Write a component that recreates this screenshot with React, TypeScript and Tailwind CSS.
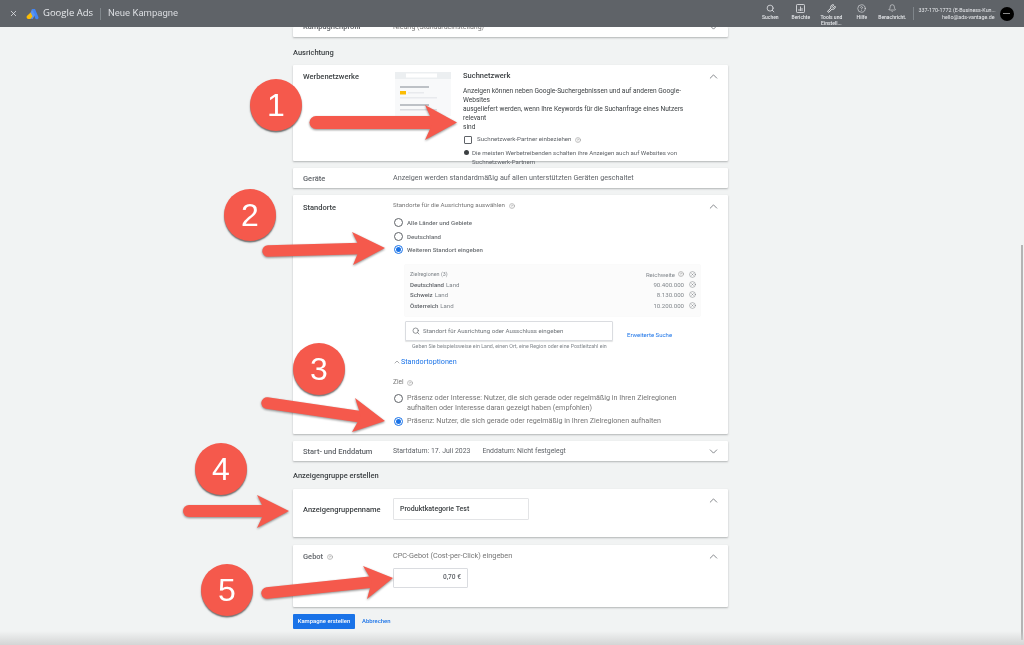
import { Bell, ChevronDown, ChevronUp, CircleHelp, CircleX, Search, Wrench, X } from "lucide-react"
import type { ReactNode } from "react"

const regions = [
  { name: "Deutschland", reach: "90.400.000" },
  { name: "Schweiz", reach: "8.130.000" },
  { name: "Österreich", reach: "10.200.000" },
]

function Help({ size = 7 }: { size?: number }) {
  return <CircleHelp size={size} strokeWidth={1.6} className="shrink-0 text-[#757575]" />
}

function Radio({ checked = false }: { checked?: boolean }) {
  return (
    <span
      className={`flex h-[9px] w-[9px] shrink-0 items-center justify-center rounded-full border-[1px] ${
        checked ? "border-[#1a73e8]" : "border-[#5f6368]"
      }`}
    >
      {checked && <span className="h-[5px] w-[5px] rounded-full bg-[#1a73e8]" />}
    </span>
  )
}

function Card({
  label,
  open = true,
  className = "",
  children,
}: {
  label: ReactNode
  open?: boolean
  className?: string
  children?: ReactNode
}) {
  return (
    <div className={`flex rounded-[1px] bg-white shadow-[0_1px_2px_rgba(60,64,67,0.35)] ${className}`}>
      <div className="w-[100px] shrink-0 pl-[10px] text-[7.5px] font-medium text-[#3c4043]">{label}</div>
      <div className="min-w-0 flex-1">{children}</div>
      <div className="flex w-[30px] shrink-0 justify-center pt-[5px]">
        {open ? (
          <ChevronUp size={13} strokeWidth={1.4} className="text-[#5f6368]" />
        ) : (
          <ChevronDown size={13} strokeWidth={1.4} className="text-[#5f6368]" />
        )}
      </div>
    </div>
  )
}

function NavItem({ icon, children }: { icon: ReactNode; children: ReactNode }) {
  return (
    <div className="flex w-[30.5px] flex-col items-center pt-[3px] text-center text-[5px] leading-[6px] font-medium text-[#e8eaed]">
      <div className="flex h-[10px] items-center">{icon}</div>
      <div className="mt-[1px]">{children}</div>
    </div>
  )
}

// the red arrows and numbers drawn on top of the screenshot
function Annotations() {
  const red = "#f5594c"
  const arrows = [
    { line: "M316 122.5H436", head: "425,105 457,122.5 425,140 433,122.5", w: 13 },
    { line: "M268 251L360 248.5", head: "352,232 385,248 353,265 360,248", w: 11.5 },
    { line: "M267 403L362 417", head: "355,398 385,421 352,432 361,416", w: 11.5 },
    { line: "M189 511H266", head: "257,495 289,511 257,528 265,511", w: 12 },
    { line: "M267 593L372 582", head: "363,566 393,578 367,599 372,581", w: 11.5 },
  ]
  const circles = [
    { n: 1, box: "left-[250px] top-[79px]" },
    { n: 2, box: "left-[224px] top-[189px]" },
    { n: 3, box: "left-[293px] top-[343px]" },
    { n: 4, box: "left-[195px] top-[443px]" },
    { n: 5, box: "left-[201px] top-[564px]" },
  ]
  return (
    <>
      <svg className="pointer-events-none absolute inset-0 drop-shadow-[0_1px_1px_rgba(0,0,0,0.45)]" width="1024" height="645">
        {arrows.map((a) => (
          <g key={a.head}>
            <path d={a.line} stroke={red} strokeWidth={a.w} strokeLinecap="round" fill="none" />
            <polygon points={a.head} fill={red} />
          </g>
        ))}
      </svg>
      {circles.map((c) => (
        <div
          key={c.n}
          className={`absolute flex h-[52px] w-[52px] items-center justify-center rounded-full bg-[#f5594c] font-['Liberation_Sans',sans-serif] text-[32px] text-white shadow-[0_1.5px_1.5px_rgba(0,0,0,0.55)] ${c.box}`}
        >
          {c.n}
        </div>
      ))}
    </>
  )
}

export default function App() {
  return (
    <div className="relative h-[645px] w-[1024px] overflow-hidden bg-[#f1f3f3] font-['Roboto',sans-serif] blur-[0.4px]">
      <header className="relative z-10 flex h-[27px] items-center bg-[#5f6368] text-[#e8eaed]">
        <X size={9} strokeWidth={2} className="ml-[9px]" />
        <svg className="ml-[8px]" width="13" height="12" viewBox="0 0 13 12">
          <path d="M6 1h3l3.5 8.2a1.8 1.8 0 0 1-3.2 1.4z" fill="#4285f4" />
          <path d="M6 1l3 6-2.4 4-4.2-.7z" fill="#5b93f0" />
          <path d="M4.6 4.6L6.6 8.4 4.4 11H2.4A2 2 0 0 1 .9 8z" fill="#fbbc04" />
        </svg>
        <span className="ml-[4px] font-['Open_Sans',sans-serif] text-[9.5px] whitespace-nowrap">Google Ads</span>
        <span className="mx-[7px] h-[12px] w-px bg-[#80868b]" />
        <span className="text-[9.5px] whitespace-nowrap text-[#dadce0]">Neue Kampagne</span>

        <div className="ml-[577px] flex h-full">
          <NavItem icon={<Search size={9} strokeWidth={2} />}>Suchen</NavItem>
          <NavItem
            icon={
              <svg width="9" height="9" viewBox="0 0 9 9" fill="none" stroke="currentColor">
                <rect x="0.5" y="0.5" width="8" height="8" rx="0.8" strokeWidth="0.8" />
                <path d="M3 7V5M4.5 7V2.5M6 7V4" strokeWidth="0.8" />
              </svg>
            }
          >
            Berichte
          </NavItem>
          <NavItem icon={<Wrench size={9} strokeWidth={2.6} />}>
            Tools und
            <br />
            Einstell...
          </NavItem>
          <NavItem icon={<CircleHelp size={9} strokeWidth={1.6} />}>Hilfe</NavItem>
          <NavItem icon={<Bell size={8.5} strokeWidth={1.6} />}>Benachricht.</NavItem>
        </div>
        <span className="mx-[5px] h-[13px] w-px bg-[#80868b]" />
        <div className="w-[76px] text-right text-[5.35px] leading-[7px] whitespace-nowrap text-[#e8eaed]">
          <div>337-170-1772 (E-Business-Kun...</div>
          <div>hello@ads-vantage.de</div>
        </div>
        <div className="ml-[5px] flex h-[14px] w-[14px] shrink-0 items-center justify-center rounded-full bg-black">
          <span className="h-[1px] w-[7px] bg-[#8a8a8a]" />
        </div>
      </header>

      <main className="ml-[293px] w-[435px]">
        <Card
          label={<div className="-mt-[5px] leading-[10px] text-[#5f6368]">Kampagnenprofil</div>}
          open={false}
          className="h-[10px] [&>div:last-child]:-mt-[6px] [&>div:last-child]:pt-0"
        >
          <div className="-mt-[5px] text-[7px] leading-[10px] text-[#757575]">Niedrig (Standardeinstellung)</div>
        </Card>

        <h2 className="mt-[11px] text-[7.5px] leading-[10px] font-medium text-[#3c4043]">Ausrichtung</h2>

        <Card label={<div className="pt-[6px]">Werbenetzwerke</div>} className="mt-[7px] h-[96px]">
          <div className="flex">
            <svg className="mt-[7px] ml-[2px] shrink-0" width="56" height="44" viewBox="0 0 56 44">
              <rect width="56" height="44" fill="#f8f9fa" />
              <rect width="56" height="7" fill="#eceff1" />
              <rect x="11" y="1.5" width="31" height="4" fill="#fff" />
              <rect x="5" y="14" width="29" height="2" fill="#bdc1c6" />
              <rect x="5" y="19" width="6" height="3.5" fill="#fbbc04" />
              <rect x="13" y="20" width="16" height="1.5" fill="#e8eaed" />
              <rect x="5" y="25" width="37" height="1.5" fill="#e8eaed" />
              <rect x="5" y="32" width="29" height="2" fill="#bdc1c6" />
              <rect x="5" y="37" width="37" height="1.5" fill="#dadce0" />
            </svg>
            <div className="ml-[12px] min-w-0 flex-1 pt-[6px]">
              <div className="text-[7.5px] leading-[10px] font-medium text-[#3c4043]">Suchnetzwerk</div>
              <p className="mt-[6px] text-[6.6px] leading-[9px] whitespace-pre-line text-[#3c4043]">
                {"Anzeigen können neben Google-Suchergebnissen und auf anderen Google-Websites\nausgeliefert werden, wenn Ihre Keywords für die Suchanfrage eines Nutzers relevant\nsind"}
              </p>
              <div className="mt-[3px] flex items-center text-[6.15px] text-[#5f6368]">
                <span className="ml-[1px] h-[8px] w-[8px] shrink-0 rounded-[1px] border-[1px] border-[#5f6368]" />
                <span className="ml-[5px] whitespace-nowrap">Suchnetzwerk-Partner einbeziehen</span>
                <span className="ml-[4px]">
                  <Help size={6} />
                </span>
              </div>
              <div className="mt-[4px] flex items-start text-[6.1px] leading-[9px] text-[#5f6368]">
                <span className="mt-[2px] ml-[1px] flex h-[5px] w-[5px] shrink-0 rounded-full bg-[#3c4043]" />
                <span className="ml-[3px]">Die meisten Werbetreibenden schalten ihre Anzeigen auch auf Websites von Suchnetzwerk-Partnern</span>
              </div>
            </div>
          </div>
        </Card>

        <Card label={<div className="pt-[5px] text-[#5f6368]">Geräte</div>} open={false} className="mt-[7px] h-[20px] [&>div:last-child]:invisible">
          <div className="pt-[5px] text-[7.2px] whitespace-nowrap text-[#5f6368]">
            Anzeigen werden standardmäßig auf allen unterstützten Geräten geschaltet
          </div>
        </Card>

        <Card label={<div className="pt-[7px]">Standorte</div>} className="mt-[7px] h-[239px]">
          <div className="flex items-center gap-[4px] pt-[6px] text-[6.2px] leading-[9px] text-[#757575]">
            Standorte für die Ausrichtung auswählen <Help size={6} />
          </div>
          <div className="mt-[8px] flex flex-col gap-[4.6px] text-[6.1px] leading-[9px] font-medium text-[#6b6f73]">
            {["Alle Länder und Gebiete", "Deutschland", "Weiteren Standort eingeben"].map((t, i) => (
              <label key={t} className="flex items-center gap-[4px] pl-[1px]">
                <Radio checked={i === 2} />
                {t}
              </label>
            ))}
          </div>

          <div className="mt-[11px] ml-[12px] w-[295px] bg-[#fbfbfb] pt-[4px] pr-[4px] pb-[6px] pl-[5px] shadow-[0_0_1px_rgba(60,64,67,0.15)]">
            <div className="flex h-[10px] items-center text-[5.4px] text-[#80868b]">
              <span>Zielregionen (3)</span>
              <span className="ml-auto text-[6px]">Reichweite</span>
              <span className="mr-[5px] ml-[3px]">
                <Help size={6} />
              </span>
              <CircleX size={7} strokeWidth={1.4} className="text-[#5f6368]" />
            </div>
            {regions.map((r) => (
              <div key={r.name} className="flex h-[10.4px] items-center text-[6.1px] text-[#80868b]">
                <span className="font-medium text-[#5f6368]">{r.name}</span>
                <span className="ml-[2px]">Land</span>
                <span className="mr-[5px] ml-auto">{r.reach}</span>
                <CircleX size={7} strokeWidth={1.4} className="text-[#5f6368]" />
              </div>
            ))}
          </div>

          <div className="mt-[5px] ml-[12px] flex items-center">
            <div className="flex h-[20px] w-[208px] items-center rounded-[1px] border border-[#dadce0] bg-white pl-[6px] text-[6.15px] text-[#70757a] shadow-[0_1px_1px_rgba(60,64,67,0.15)]">
              <Search size={8} strokeWidth={2} className="text-[#5f6368]" />
              <span className="ml-[3px] whitespace-nowrap">Standort für Ausrichtung oder Ausschluss eingeben</span>
            </div>
            <a className="mt-[6px] ml-[14px] text-[6px] whitespace-nowrap text-[#1a73e8]">Erweiterte Suche</a>
          </div>
          <div className="mt-[2px] ml-[19px] text-[5.3px] leading-[7px] whitespace-nowrap text-[#80868b]">
            Geben Sie beispielsweise ein Land, einen Ort, eine Region oder eine Postleitzahl ein
          </div>

          <div className="mt-[7px] flex items-center text-[7.2px] leading-[9px] text-[#1a73e8]">
            <ChevronUp size={8} strokeWidth={1.6} className="text-[#5f6368]" />
            Standortoptionen
          </div>

          <div className="mt-[12px] flex items-center gap-[3px] text-[6.6px] leading-[9px] text-[#757575]">
            Ziel <Help size={6} />
          </div>
          <div className="mt-[6px] flex gap-[4px] pl-[1px] text-[7.2px] leading-[10px] text-[#757575]">
            <span className="mt-[1px]">
              <Radio />
            </span>
            <span className="whitespace-pre-line">
              {"Präsenz oder Interesse: Nutzer, die sich gerade oder regelmäßig in Ihren Zielregionen\naufhalten oder Interesse daran gezeigt haben (empfohlen)"}
            </span>
          </div>
          <div className="mt-[3px] flex gap-[4px] pl-[1px] text-[7.2px] leading-[10px] text-[#757575]">
            <span className="mt-[1px]">
              <Radio checked />
            </span>
            <span className="whitespace-nowrap">Präsenz: Nutzer, die sich gerade oder regelmäßig in Ihren Zielregionen aufhalten</span>
          </div>
        </Card>

        <Card label={<div className="pt-[5px] text-[#5f6368]">Start- und Enddatum</div>} open={false} className="mt-[7px] h-[20px] [&>div:last-child]:pt-[4px]">
          <div className="flex gap-[12px] pt-[5px] text-[6.9px] whitespace-nowrap text-[#5f6368]">
            <span>Startdatum: 17. Juli 2023</span>
            <span>Enddatum: Nicht festgelegt</span>
          </div>
        </Card>

        <h2 className="mt-[10px] text-[7.5px] leading-[10px] font-medium text-[#3c4043]">Anzeigengruppe erstellen</h2>

        <Card label={<div className="pt-[15px] text-[#3c4043]">Anzeigengruppenname</div>} className="mt-[8px] h-[48px]">
          <div className="pt-[9px]">
            <div className="flex h-[22px] w-[136px] items-center rounded-[1px] border border-[#e3e4e6] pl-[6px] text-[7px] font-medium text-[#3c4043]">
              Produktkategorie Test
            </div>
          </div>
        </Card>

        <Card
          label={
            <div className="flex items-center gap-[4px] pt-[6px] text-[#5f6368]">
              Gebot <Help size={6} />
            </div>
          }
          className="mt-[8px] h-[62px]"
        >
          <div className="pt-[6px] text-[7.3px] leading-[9px] text-[#757575]">CPC-Gebot (Cost-per-Click) eingeben</div>
          <div className="mt-[8px] flex h-[20px] w-[75px] items-center justify-end rounded-[1px] border border-[#dadce0] pr-[6px] text-[6.6px] font-medium text-[#5f6368]">
            0,70 €
          </div>
        </Card>

        <div className="mt-[7px] flex items-center">
          <button className="h-[15px] w-[62px] rounded-[1px] bg-[#1a73e8] text-[5.9px] font-medium whitespace-nowrap text-white">Kampagne erstellen</button>
          <a className="ml-[7px] text-[5.9px] font-medium text-[#1a73e8]">Abbrechen</a>
        </div>
      </main>

      <div className="absolute top-[245px] right-[1px] bottom-[5px] w-[2px] bg-[#b4b4b4]" />
      <div className="pointer-events-none absolute inset-x-0 bottom-0 h-[14px] bg-gradient-to-b from-transparent to-[#d4d5d5]" />
      <Annotations />
    </div>
  )
}
